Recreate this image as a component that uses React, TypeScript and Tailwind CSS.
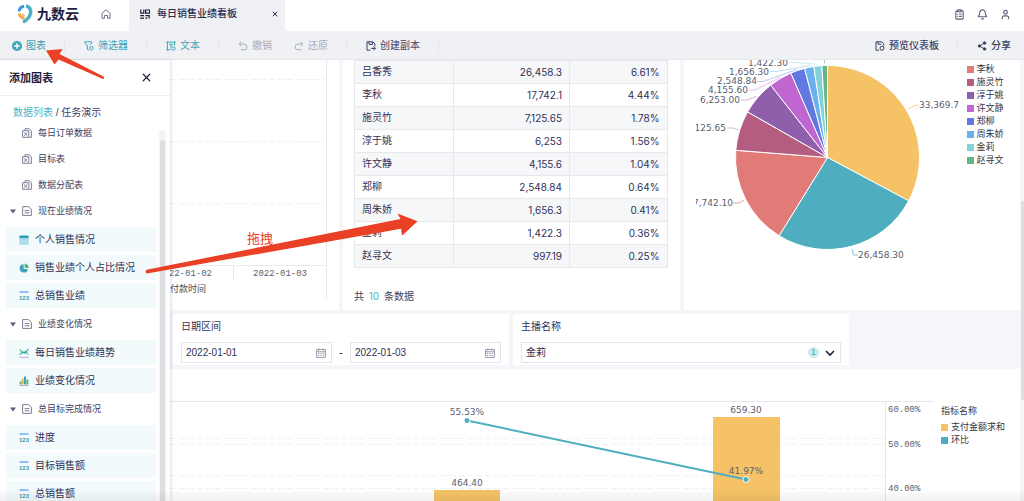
import type { ReactNode } from 'react';
import { Bell, ClipboardList, Plus, Share2, User, X } from 'lucide-react';

const FILES = ['每日订单数据', '目标表', '数据分配表'];

type ItemKind = 'table' | 'pie' | 'kpi' | 'line' | 'bar';

const GROUPS: { name: string; items: { kind: ItemKind; name: string }[] }[] = [
  {
    name: '现在业绩情况',
    items: [
      { kind: 'table', name: '个人销售情况' },
      { kind: 'pie', name: '销售业绩个人占比情况' },
      { kind: 'kpi', name: '总销售业绩' },
    ],
  },
  {
    name: '业绩变化情况',
    items: [
      { kind: 'line', name: '每日销售业绩趋势' },
      { kind: 'bar', name: '业绩变化情况' },
    ],
  },
  {
    name: '总目标完成情况',
    items: [
      { kind: 'kpi', name: '进度' },
      { kind: 'kpi', name: '目标销售额' },
      { kind: 'kpi', name: '总销售额' },
    ],
  },
];

const ROWS = [
  ['吕香秀', '26,458.3', '6.61%'],
  ['李秋', '17,742.1', '4.44%'],
  ['施灵竹', '7,125.65', '1.78%'],
  ['淳于姚', '6,253', '1.56%'],
  ['许文静', '4,155.6', '1.04%'],
  ['郑柳', '2,548.84', '0.64%'],
  ['周朱娇', '1,656.3', '0.41%'],
  ['金莉', '1,422.3', '0.36%'],
  ['赵寻文', '997.19', '0.25%'],
];

const SLICES = [
  { value: 33369.7, color: '#f5c265' },
  { value: 26458.3, color: '#4fadc0' },
  { value: 17742.1, color: '#e07b77' },
  { value: 7125.65, color: '#b55d80' },
  { value: 6253, color: '#905fab' },
  { value: 4155.6, color: '#c066d0' },
  { value: 2548.84, color: '#6078e0' },
  { value: 1656.3, color: '#6ab0ec' },
  { value: 1422.3, color: '#84d2d9' },
  { value: 997.19, color: '#66b488' },
];

const PIE_LABELS = [
  { text: '33,369.70', x: 235, y: 48, right: false, color: '#f5c265', line: '224,49 231,45.5 235,45' },
  { text: '26,458.30', x: 174, y: 198, right: false, color: '#4fadc0', line: '168,189 169.5,195 174,195' },
  { text: '17,742.10', x: 49, y: 146, right: true, color: '#e07b77', line: '60,140 55,143 49,143' },
  { text: '7,125.65', x: 42, y: 71, right: true, color: '#d59ab0', line: '54,70 49,68 43,68' },
  { text: '6,253.00', x: 56, y: 43, right: true, color: '#b794ca', line: '72,36.5 63,40 57,40' },
  { text: '4,155.60', x: 64, y: 33, right: true, color: '#dba2e4', line: '96,17.5 71,30 65,30' },
  { text: '2,548.84', x: 73, y: 24, right: true, color: '#a0aeee', line: '113,9.5 79,21.5 73,21.5' },
  { text: '1,656.30', x: 85, y: 15, right: true, color: '#a6d0f4', line: '126,5.5 93,11.5 86,11.5' },
  { text: '1,422.30', x: 104, y: 6, right: true, color: '#b5e4e8', line: '134,4.5 111,2.5 105,2.5' },
];

const LEGEND = [
  ['吕香秀', '#4fadc0'],
  ['李秋', '#e07b77'],
  ['施灵竹', '#b55d80'],
  ['淳于姚', '#905fab'],
  ['许文静', '#c066d0'],
  ['郑柳', '#6078e0'],
  ['周朱娇', '#6ab0ec'],
  ['金莉', '#84d2d9'],
  ['赵寻文', '#66b488'],
];

function Logo() {
  return (
    <svg width="16" height="20" viewBox="0 0 16 20" fill="none" strokeWidth="3">
      <path d="M2 7.400A6 6 0 0 1 7 2.200" stroke="#3f97e0" />
      <path d="M2.200 9.400A6 6 0 0 0 7.600 14.200" stroke="#f0ab50" />
      <path d="M5 9.800l2.600 2.200" stroke="#f0ab50" strokeWidth="1.200" />
      <path
        d="M9 .5C13.300 .7 15.600 4 15.400 8C15.200 13 11.200 17.600 6.600 19.600L5.400 16.800C9.200 14.600 11.600 11.600 11.900 8.600C12.100 6 11 4.200 9 3.400Z"
        fill="#4aafc0"
      />
    </svg>
  );
}

function ItemIcon({ kind }: { kind: ItemKind }) {
  return (
    <svg width="10" height="10" viewBox="0 0 10 10" fill="none" className="shrink-0">
      {kind === 'table' && (
        <>
          <path d="M.5 .5h9v2.500h-9z" fill="#2f9fb5" />
          <path d="M.5 3h9v6.500h-9z" fill="#8fd3df" />
          <path d="M3.300 3v6.500M6.600 3v6.500M.5 5.200h9M.5 7.400h9" stroke="#fff" strokeWidth=".4" />
        </>
      )}
      {kind === 'pie' && (
        <>
          <path d="M4.600 1.200A4.200 4.200 0 1 0 8.900 6.400L4.600 5.400z" fill="#38a5ba" />
          <path d="M5.600 .4A4.300 4.300 0 0 1 9.600 5.200L5.600 4.400z" fill="#53b86c" />
        </>
      )}
      {kind === 'kpi' && (
        <>
          <path d="M.5 1h9" stroke="#6aa8f0" strokeWidth="1.400" />
          <text x="5" y="9" textAnchor="middle" fontSize="6" fontWeight="700" fill="#2f9fb5">
            123
          </text>
        </>
      )}
      {kind === 'line' && (
        <>
          <path d="M.6 1.200L3.600 5L6.400 3.400L9.400 6.600" stroke="#5cc27c" strokeWidth="1.200" />
          <path d="M.6 6.600L3.800 4L6 5.200L9.400 1.200" stroke="#38a5ba" strokeWidth="1.200" />
          <path d="M.5 9.300h9" stroke="#a5a9b8" strokeWidth=".9" />
        </>
      )}
      {kind === 'bar' && (
        <>
          <path d="M.6 5.400h2v3h-2zM7.400 3.400h2v5h-2z" fill="#53b86c" />
          <path d="M2.600 2.600h2v5.800h-2z" fill="#f0b040" />
          <path d="M5 .6h2v7.800H5z" fill="#38a5ba" />
          <path d="M.5 9.500h9" stroke="#a5a9b8" strokeWidth=".9" />
        </>
      )}
    </svg>
  );
}

function FileIcon() {
  return (
    <svg width="10" height="10" viewBox="0 0 10 10" fill="none" stroke="#6d7089" className="shrink-0">
      <path d="M3 2.400V.7h4.200L9.400 3v6.300H7.400" strokeWidth=".9" />
      <path d="M.6 2.700h6.200v6.600H.6z" strokeWidth=".9" />
      <path d="M2.300 4.400l2.800 3.400M5.100 4.400L2.300 7.800" strokeWidth=".9" />
    </svg>
  );
}

function DocIcon() {
  return (
    <svg width="10" height="10" viewBox="0 0 10 10" fill="none" stroke="#6d7089" className="shrink-0">
      <path d="M.6 .6h6L9.400 3.400v6H.6z" strokeWidth=".9" />
      <path d="M2.600 4.600h4.800M2.600 6.800h4.800" strokeWidth=".9" />
    </svg>
  );
}

function CalendarIcon() {
  return (
    <svg width="10" height="10" viewBox="0 0 10 10" fill="none" stroke="#7d8096" className="shrink-0">
      <path d="M.6 1.600h8.800v7.800H.6zM.6 3.800h8.800M2.800 .4v2M7.200 .4v2" strokeWidth=".8" />
      <path d="M2 5.600h6M2 7.400h6" strokeWidth=".9" strokeDasharray="1.2 1.2" />
    </svg>
  );
}

function ToolIcon({ children }: { children: ReactNode }) {
  return (
    <svg width="10" height="10" viewBox="0 0 10 10" fill="none" stroke="currentColor" strokeWidth="1">
      {children}
    </svg>
  );
}

function ToolButton({ icon, label, className }: { icon: ReactNode; label: string; className: string }) {
  return (
    <button className={`flex items-center gap-1 whitespace-nowrap ${className}`}>
      {icon}
      {label}
    </button>
  );
}

function Divider() {
  return <span className="ml-[18px] mr-[19px] h-3 w-px bg-[#e3e5ea]" />;
}

function Header() {
  return (
    <header className="flex h-[31px] shrink-0 bg-white">
      <a href="#" className="ml-[17px] flex items-center gap-1 pb-[3px] text-[14px] font-bold leading-none text-[#1d1d3f]">
        <Logo />
        九数云
      </a>
      <button aria-label="首页" className="ml-[22px] pb-[3px] text-[#6d7089]">
        <ToolIcon>
          <path d="M1 9.300V4.300L5 .8l4 3.500v5H6.600V6.400H3.400v2.900z" strokeLinejoin="round" />
        </ToolIcon>
      </button>
      <div className="ml-[18px] flex w-[156px] items-center bg-[#f0f1f5] pb-[3px] pl-[11px] pr-1.5 font-medium text-[#2b2b50]">
        <svg width="10" height="10" viewBox="0 0 10 10" fill="none" stroke="#1d1d3f" strokeWidth="1.200">
          <path d="M.8 .4v3.800h3V.4M.2 6.600h3.800M.2 9.200h3.800M5.600 1h4v3.200h-4zM5.400 6.600h3.800v3M5.400 9.200h2" />
        </svg>
        <span className="ml-[7px] flex-1">每日销售业绩看板</span>
        <button aria-label="关闭标签">
          <X size={8} strokeWidth={3} />
        </button>
      </div>
      <div className="ml-auto flex items-center gap-3 pb-[3px] pr-[13px] text-[#5a5d78]">
        <button aria-label="任务">
          <ClipboardList size={11} strokeWidth={2.4} />
        </button>
        <button aria-label="通知">
          <Bell size={11} strokeWidth={2.4} />
        </button>
        <button aria-label="账户">
          <User size={11} strokeWidth={2.4} />
        </button>
      </div>
    </header>
  );
}

function Toolbar() {
  return (
    <div className="flex h-[29px] shrink-0 items-center border-b border-[#e6e8ec] bg-[#f0f1f5] pl-3 pr-[13px] pt-0.5">
      <ToolButton
        className="text-[#3ba4b8]"
        label="图表"
        icon={
          <span className="flex size-2.5 items-center justify-center rounded-full bg-[#3ba4b8] text-white">
            <Plus size={8} strokeWidth={4} />
          </span>
        }
      />
      <Divider />
      <ToolButton
        className="text-[#3ba4b8]"
        label="筛选器"
        icon={
          <ToolIcon>
            <path d="M4.800 9.200L3.400 8.400V4.800L.8 1.800V.8h7v1L5.600 4.200" />
            <circle cx="7.4" cy="7.2" r="1.7" />
          </ToolIcon>
        }
      />
      <Divider />
      <ToolButton
        className="text-[#3ba4b8]"
        label="文本"
        icon={
          <ToolIcon>
            <path d="M.4 1.200h9.200M1.400 .4v9.200M8.600 .4v4M.4 8.800h4.200M3.200 3.400h3.800M5 3.400v3.400" />
            <circle cx="7.4" cy="7.4" r="1.7" />
          </ToolIcon>
        }
      />
      <Divider />
      <ToolButton
        className="text-[#a9acba]"
        label="撤销"
        icon={
          <ToolIcon>
            <path d="M3.400 .8L1.200 3l2.200 2.200M1.200 3H6a2.900 2.900 0 0 1 0 5.800H2.600" />
          </ToolIcon>
        }
      />
      <ToolButton
        className="ml-[22px] text-[#a9acba]"
        label="还原"
        icon={
          <ToolIcon>
            <path d="M6.600 .8L8.800 3L6.600 5.200M8.800 3H4a2.900 2.900 0 0 0 0 5.800h3.400" />
          </ToolIcon>
        }
      />
      <Divider />
      <ToolButton
        className="text-[#3b3e63]"
        label="创建副本"
        icon={
          <ToolIcon>
            <path d="M4.400 9.200H1V.8h5.800l2 2v2.400M3 .8v2.600h3.400V.8M5 7.400h4.400M7.400 5.600l2 1.800l-2 1.800" />
          </ToolIcon>
        }
      />
      <Divider />
      <ToolButton
        className="ml-auto font-medium text-[#3b3e63]"
        label="预览仪表板"
        icon={
          <ToolIcon>
            <path d="M4 9.200H1V.8h5.800l2 2v1.800M3 .8v2.400h3.400" />
            <circle cx="7" cy="7.2" r="2" />
          </ToolIcon>
        }
      />
      <Divider />
      <ToolButton className="font-medium text-[#3b3e63]" label="分享" icon={<Share2 size={10} fill="currentColor" />} />
    </div>
  );
}

function Sidebar() {
  return (
    <aside className="relative z-10 flex w-[170px] shrink-0 flex-col bg-white shadow-[1px_0_3px_rgba(30,35,60,0.16)]">
      <div className="flex h-9 shrink-0 items-center justify-between border-b border-[#eceef1] pl-[9px] pr-[17px] text-[#1d1d3f]">
        <h2 className="text-[11px] font-bold">添加图表</h2>
        <button aria-label="关闭">
          <X size={13} strokeWidth={2.2} />
        </button>
      </div>
      <nav className="flex h-6 shrink-0 items-end pl-[13px] leading-[14px] text-[#3b3e63]">
        <a href="#" className="text-[#4fb3c4]">
          数据列表
        </a>
        <span className="whitespace-pre"> / 任务演示</span>
      </nav>
      <div className="flex min-h-0 flex-1">
        <div className="min-w-0 flex-1 overflow-hidden pl-1.5">
          <ul>
            {FILES.map((name) => (
              <li key={name} className="flex h-[26px] items-center gap-1.5 pl-4 text-[9px] text-[#3b3e63]">
                <FileIcon />
                {name}
              </li>
            ))}
          </ul>
          {GROUPS.map((group) => (
            <section key={group.name}>
              <h3 className="flex h-[26px] items-center text-[9px] text-[#3b3e63]">
                <svg width="6" height="5" viewBox="0 0 6 5" className="ml-1 mr-1.5">
                  <path d="M0 .4h6L3 4.600z" fill="#5a5d78" />
                </svg>
                <DocIcon />
                <span className="ml-1.5">{group.name}</span>
              </h3>
              <ul className="flex flex-col gap-[3px] py-[3px]">
                {group.items.map((item) => (
                  <li key={item.name} className="flex h-[25px] items-center gap-1.5 bg-[#f2fafc] pl-[13px] text-[#2f3257]">
                    <ItemIcon kind={item.kind} />
                    {item.name}
                  </li>
                ))}
              </ul>
            </section>
          ))}
        </div>
        <div className="ml-[3px] mr-1 mt-2.5 w-[7px] rounded-t-full bg-[#f3f4f6] pt-2.5">
          <div className="mx-px h-full rounded-t-full bg-[#dcdee1]" />
        </div>
      </div>
    </aside>
  );
}

function TrendCard() {
  return (
    <div className="overflow-hidden bg-white">
      <svg width="169" height="250" fill="none" stroke="#e9eaee" fontSize="9">
        <path d="M0 19.500h156M0 81.500h156M0 143.500h156" strokeDasharray="6 3" stroke="#f0f1f3" />
        <path d="M156.500 0v238M0 205.500h156M63.500 205v15" />
        <g stroke="none" fill="#5b6070" textAnchor="middle" className="font-['Liberation_Mono',monospace]">
          <text x="15" y="216">2022-01-02</text>
          <text x="110" y="216">2022-01-03</text>
        </g>
        <text x="0" y="232" stroke="none" fill="#444859">
          付款时间
        </text>
      </svg>
    </div>
  );
}

function TableCard() {
  return (
    <div className="bg-white pl-[11px] pr-3">
      <table className="w-full table-fixed border-collapse text-[#2f3257]">
        <colgroup>
          <col className="w-[99px]" />
          <col className="w-[116px]" />
          <col />
        </colgroup>
        <tbody>
          {ROWS.map(([name, amount, share]) => (
            <tr key={name} className="h-[23px] odd:bg-[#f6f7f9]">
              <td className="border border-[#e6e8ec] py-0 pl-[7px]">{name}</td>
              <td className="border border-[#e6e8ec] py-0 pr-[7px] text-right font-['Inter',sans-serif]">{amount}</td>
              <td className="border border-[#e6e8ec] py-0 pr-[7px] text-right font-['Inter',sans-serif]">{share}</td>
            </tr>
          ))}
        </tbody>
      </table>
      <p className="mt-5 text-[#3b3e63]">
        共 <span className="mx-0.5 font-['Inter',sans-serif] text-[#4fb3c4]">10</span> 条数据
      </p>
    </div>
  );
}

function PieCard() {
  const cx = 143.5;
  const cy = 97.5;
  const r = 92;
  const total = SLICES.reduce((sum, s) => sum + s.value, 0);
  let angle = -Math.PI / 2;

  const paths = SLICES.map((s) => {
    const next = angle + (s.value / total) * Math.PI * 2;
    const d = `M${cx} ${cy}L${cx + r * Math.cos(angle)} ${cy + r * Math.sin(angle)}A${r} ${r} 0 0 1 ${
      cx + r * Math.cos(next)
    } ${cy + r * Math.sin(next)}Z`;
    angle = next;
    return <path key={s.color} d={d} fill={s.color} stroke="#fff" strokeWidth="1" strokeLinejoin="round" />;
  });

  return (
    <div className="flex overflow-hidden bg-white pl-3">
      <svg width="263" height="250" viewBox="12 0 263 250" fontSize="9" className="shrink-0">
        {paths}
        <path d="M140.500 0v3.500" stroke="#66b488" strokeWidth=".6" />
        {PIE_LABELS.map((l) => (
          <g key={l.text}>
            <polyline points={l.line} fill="none" stroke={l.color} strokeWidth=".7" />
            <text
              x={l.x}
              y={l.y}
              fill="#5b6070"
              textAnchor={l.right ? 'end' : 'start'}
              className="font-['DejaVu_Sans',sans-serif]"
            >
              {l.text}
            </text>
          </g>
        ))}
      </svg>
      <ul className="-mt-2.5 ml-2 text-[9px] leading-[13px] text-[#33363f]">
        {LEGEND.map(([name, color]) => (
          <li key={name} className="flex items-center gap-[3px] whitespace-nowrap">
            <i className="size-[7px]" style={{ backgroundColor: color }} />
            {name}
          </li>
        ))}
      </ul>
    </div>
  );
}

function DateBox({ label, value }: { label: string; value: string }) {
  return (
    <div className="flex h-[21px] min-w-0 flex-1 items-center border border-[#e3e5ea] pl-1 pr-[5px]">
      <input aria-label={label} defaultValue={value} className="w-full min-w-0 flex-1 text-[#2f3257] outline-none" />
      <CalendarIcon />
    </div>
  );
}

function Filters() {
  return (
    <div className="grid grid-cols-[336px_336px] gap-1 pl-[3px]">
      <div role="group" aria-labelledby="range" className="bg-white px-2 pb-0.5 pt-[3px]">
        <p id="range" className="mb-[5px] leading-5 text-[#2f3257]">
          日期区间
        </p>
        <div className="flex items-center">
          <DateBox label="开始日期" value="2022-01-01" />
          <span className="w-[18px] text-center">-</span>
          <DateBox label="结束日期" value="2022-01-03" />
        </div>
      </div>
      <div className="bg-white px-2 pb-0.5 pt-[3px]">
        <label htmlFor="anchor" className="mb-[5px] block leading-5 text-[#2f3257]">
          主播名称
        </label>
        <div className="flex h-[21px] items-center border border-[#e3e5ea] pl-1 pr-[5px]">
          <select id="anchor" className="min-w-0 flex-1 appearance-none text-[#2f3257] outline-none">
            <option>金莉</option>
          </select>
          <span className="mr-1.5 flex size-[11px] items-center justify-center rounded-full bg-[#cfeaef] text-[9px] leading-none text-[#3ba4b8]">
            1
          </span>
          <svg width="10" height="10" viewBox="0 0 10 10" fill="none" stroke="#1d1d3f" strokeWidth="1.600">
            <path d="M1 3l4 4l4-4" />
          </svg>
        </div>
      </div>
    </div>
  );
}

function ComboCard() {
  return (
    <div className="flex min-h-0 flex-1 overflow-hidden bg-white">
      <svg width="764" height="132" fill="none" fontSize="9" className="shrink-0">
        <path
          d="M0 69.500h715M0 75.500h715M0 106.500h715M0 119.500h715"
          stroke="#f0f1f3"
          strokeDasharray="6 3"
        />
        <path d="M0 32.500h764M715.500 32v100" stroke="#e6e8ec" />
        <path d="M264 121h66v11h-66zM543 48h67v84h-67z" fill="#f5c265" />
        <path d="M297 51.500L576 110.500" stroke="#4fadc0" strokeWidth="2" />
        <circle cx="297" cy="51.5" r="3" fill="#4fadc0" stroke="#fff" />
        <circle cx="576" cy="110.5" r="3" fill="#4fadc0" stroke="#fff" />
        <g fill="#5b6070" textAnchor="middle" className="font-['DejaVu_Sans',sans-serif]">
          <text x="297" y="46">55.53%</text>
          <text x="297" y="117">464.40</text>
          <text x="576" y="44">659.30</text>
          <text x="576" y="105">41.97%</text>
        </g>
        <g fill="#5b6070" className="font-['Liberation_Mono',monospace]">
          <text x="718" y="43">60.00%</text>
          <text x="718" y="78">50.00%</text>
          <text x="718" y="122">40.00%</text>
        </g>
      </svg>
      <div className="ml-[7px] mt-9 text-[9px] leading-[13px] text-[#33363f]">
        <p className="mb-[3px]">指标名称</p>
        <p className="flex items-center gap-[3px] whitespace-nowrap">
          <i className="size-[7px] bg-[#f5c265]" />
          支付金额求和
        </p>
        <p className="flex items-center gap-[3px] whitespace-nowrap">
          <i className="size-[7px] bg-[#4fadc0]" />
          环比
        </p>
      </div>
    </div>
  );
}

// Hand-drawn guide marks that lie over the whole page
function Guide() {
  return (
    <svg className="pointer-events-none absolute inset-0 z-20 h-full w-full" fill="#ea4025">
      <path d="M46 50.500L62.500 49L59.500 54L103.500 76.500Q105 78.500 103 79L58.500 59.500L54.500 64.500Z" />
      <path d="M146.500 269.800L400.500 219L397.500 213.500L417.500 221.300L402 235.700L401 228.700L147 273.600Q144.500 272 146.500 269.800Z" />
      <text x="247" y="243" fontSize="13">
        拖拽
      </text>
    </svg>
  );
}

export default function App() {
  return (
    <div className="relative flex h-screen flex-col overflow-hidden bg-[#f5f6f9] font-['Liberation_Sans','Noto_Sans_CJK_SC',sans-serif] text-[10px] leading-4">
      <Header />
      <Toolbar />
      <div className="flex min-h-0 flex-1">
        <Sidebar />
        <main className="flex min-w-0 flex-1 flex-col gap-1 overflow-hidden">
          <div className="grid shrink-0 grid-cols-[169px_1fr_1fr] gap-1">
            <TrendCard />
            <TableCard />
            <PieCard />
          </div>
          <Filters />
          <ComboCard />
        </main>
        <div className="w-1 shrink-0 pl-px pt-[141px]">
          <div className="h-[199px] rounded-full bg-[#dcdee3]" />
        </div>
      </div>
      <div className="pointer-events-none absolute inset-x-0 bottom-0 z-20 h-3 bg-linear-to-t from-black/6 to-transparent" />
      <Guide />
    </div>
  );
}
